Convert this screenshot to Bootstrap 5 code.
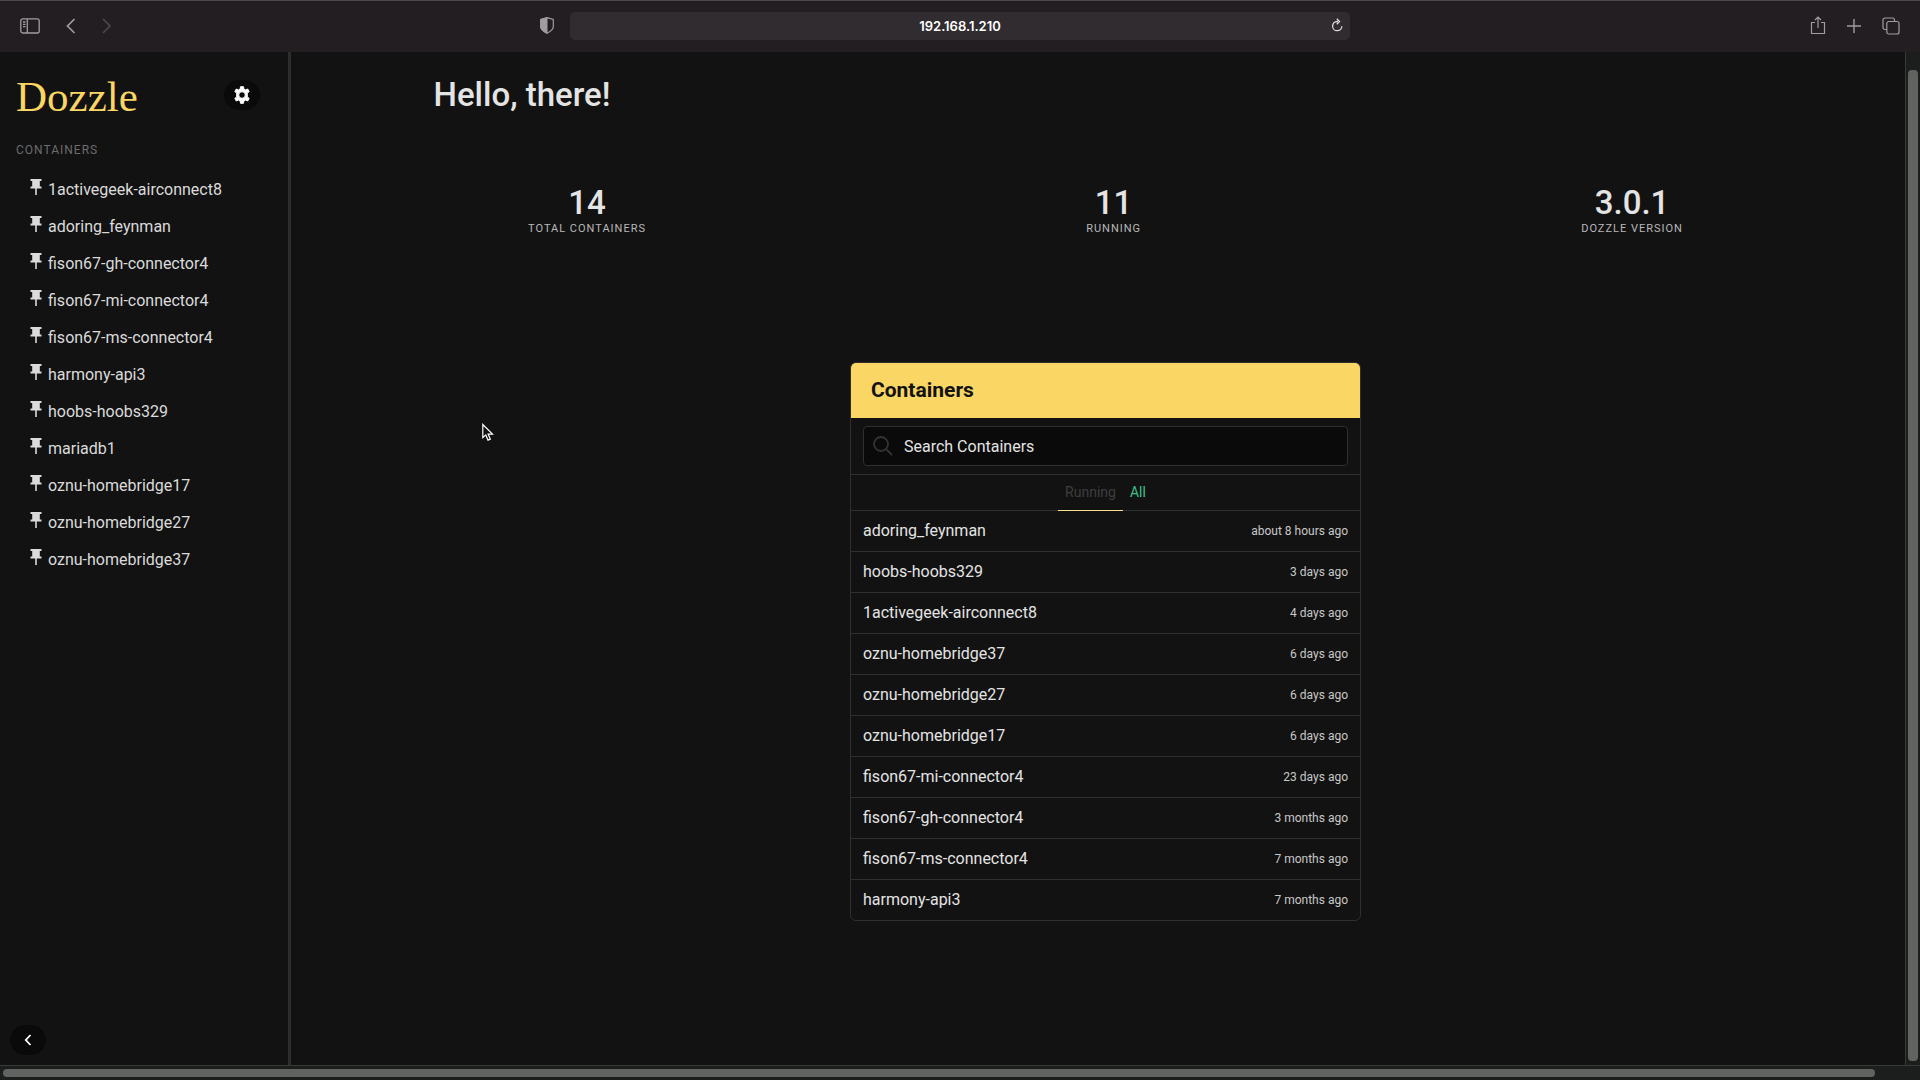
<!DOCTYPE html>
<html lang="en">
<head>
<meta charset="utf-8">
<meta name="viewport" content="width=device-width, initial-scale=1">
<title>Dozzle</title>
<link href="https://cdn.jsdelivr.net/npm/bootstrap@5.3.0/dist/css/bootstrap.min.css" rel="stylesheet">
<style>
  body { font-family: Roboto, "Liberation Sans", sans-serif; font-size: 16px; line-height: 24px; background: #121212; color: #e4e4e4; }
  a { color: inherit; text-decoration: none; }
  svg { display: block; fill: none; stroke: currentColor; }
  .toolbar { height: 52px; background: #221e22; border-top: 1px solid #4b474b; padding-bottom: 2px; color: #a09ca0; }
  .tool { background: none; border: 0; padding: 0; color: inherit; }
  .tool:disabled { color: #4c484c; }
  .side { flex: 1 1 0; }
  .address { flex: 0 1 780px; }
  .address input { height: 28px; border: 0; border-radius: 5px; background: #302c30; color: #fff; font: 600 13px Inter, sans-serif; }
  .reload { right: 7px; top: 6px; color: #dcdadc; }
  .sidebar { width: 291px; border-right: 3px solid #2e2f2d; padding: 21px 28px 10px 16px; }
  .logo { font: 43px/48px "Liberation Serif", serif; color: #fad664; }
  .pill { width: 36px; height: 30px; border: 0; border-radius: 15px; background: #0a0a0a; color: #fff; }
  .settings { margin-bottom: 4px; }
  .collapse-btn { margin-left: -6px; }
  .menu-title { font-size: 12px; line-height: 18px; letter-spacing: 1px; color: #6c6c6c; text-transform: uppercase; margin-top: 20px; }
  .menu { padding: 12px 0 0 14px; }
  .menu a { display: flex; gap: 6px; height: 37px; align-items: center; color: #dbdbdb; }
  .menu svg { margin-bottom: 6px; }
  .content { padding: 0 2px 0 17px; }
  .hello { font-size: 33px; line-height: 36px; font-weight: 500; margin: 0; padding-top: 25px; }
  .inner { width: 100%; max-width: 1344px; }
  .stats { margin-top: 72px; }
  .stat-value { font-size: 33px; line-height: 36px; font-weight: 500; }
  .stat-name { font-size: 11px; line-height: 16px; letter-spacing: 1px; text-transform: uppercase; color: #b8b8b8; }
  .panel { width: 511px; margin-top: 125px; border: 1px solid #2f2f2f; border-radius: 6px; overflow: hidden; }
  .panel-title { background: #fad664; color: #121212; font-size: 21px; font-weight: 700; line-height: 24px; padding: 15px 20px 16px; margin: 0; }
  .search { padding: 8px 12px; border-bottom: 1px solid #2f2f2f; }
  .search input { height: 40px; border: 1px solid #2f2f2f; border-radius: 4px; background: #0a0a0a; color: #e4e4e4; padding: 0 12px 0 40px; }
  .search input::placeholder { color: #e4e4e4; opacity: 1; }
  .search svg { left: 22px; top: 18px; color: #333; }
  .filters { height: 36px; border-bottom: 1px solid #2f2f2f; font-size: 14px; }
  .filters a { height: 36px; line-height: 34px; padding: 0 7px; color: #3cc08e; }
  .filters a.current { color: #3f3f3f; border-bottom: 1px solid #fadf90; }
  .entry { height: 41px; padding: 0 12px; border-bottom: 1px solid #2f2f2f; }
  .entry:last-child { border-bottom: 0; height: 40px; }
  .when { font-size: 12px; color: #c8c8c8; }
  .vtrack { width: 15px; border-left: 1px solid #383a38; background: #1c1e1d; padding: 18px 2px 4px; }
  .htrack { height: 15px; border-top: 1px solid #383a38; background: #1c1e1d; padding: 3px 45px 3px 3px; }
  .thumb { background: #616360; border-radius: 4px; height: 100%; }
  .pointer { left: 482px; top: 423px; }
</style>
<script src="https://cdn.jsdelivr.net/npm/bootstrap@5.3.0/dist/js/bootstrap.bundle.min.js"></script>
</head>
<body class="d-flex flex-column vh-100 overflow-hidden">
<svg width="0" height="0" class="position-absolute" aria-hidden="true"><symbol id="pin" viewBox="0 0 12 16"><path d="M.5 0h11v2H9.800v5.500h1.700v2H6.800V16H5.200V9.500H.5v-2h1.700V2H.5z" fill="#dbdbdb" stroke="none"/></symbol></svg>

<header class="toolbar d-flex align-items-center flex-shrink-0">
  <div class="side d-flex align-items-center ps-3">
    <button class="tool ms-1" aria-label="Sidebar"><svg width="20" height="16" viewBox="0 0 20 16" stroke-width="1.300"><rect x=".8" y=".8" width="18.400" height="14.200" rx="2"/><path d="M7.300 1v14M3 4h2.500M3 6.300h2.500M3 8.600h2.500"/></svg></button>
    <button class="tool ms-4" aria-label="Back"><svg width="14" height="16" viewBox="0 0 14 16" stroke-width="1.700"><path d="M10.500 1 3.500 8l7 7"/></svg></button>
    <button class="tool ms-4" aria-label="Forward" disabled><svg width="10" height="16" viewBox="2 0 10 16" stroke-width="1.700"><path d="m3 1 7 7-7 7"/></svg></button>
    <button class="tool ms-auto me-3" aria-label="Privacy report"><svg width="14" height="17" viewBox="0 0 14 17"><path d="M7 .7 13.300 2.500v7C13.300 13 9.500 15 7 16.300 4.500 15 .7 13 .7 9.500v-7z" stroke-width="1.200"/><path d="M7 .7v15.600C4.500 15 .7 13 .7 9.500v-7z" fill="currentColor"/></svg></button>
  </div>
  <div class="address position-relative">
    <input class="w-100 text-center d-block" type="text" value="192.168.1.210" aria-label="Address">
    <button class="tool reload position-absolute" aria-label="Reload"><svg width="11" height="15" viewBox="0 0 11 15" stroke-width="1.300"><path d="M6 3.500H5.200A4.600 4.600 0 1 0 9.800 8.200M4.800.8l2.700 2.700-2.700 2.700"/></svg></button>
  </div>
  <div class="side d-flex align-items-center justify-content-end pe-3">
    <button class="tool" aria-label="Share"><svg width="16" height="19" viewBox="0 0 16 19" stroke-width="1.200"><path d="M5 6.500H1.500v11h13v-11H11M8 12V1.200M5 4l3-3 3 3"/></svg></button>
    <button class="tool ms-3 ps-1" aria-label="New tab"><svg width="16" height="16" viewBox="0 0 16 16" stroke-width="1.400"><path d="M8 1v14M1 8h14"/></svg></button>
    <button class="tool ms-3 ps-1 pe-1" aria-label="Tab overview"><svg width="18" height="18" viewBox="0 0 18 18" stroke-width="1.200"><path d="M4.500 12.500H3a2 2 0 0 1-2-2V3a2 2 0 0 1 2-2h7.500a2 2 0 0 1 2 2v1.500"/><rect x="4.800" y="4.500" width="12.200" height="12.500" rx="2"/></svg></button>
  </div>
</header>

<div class="d-flex flex-grow-1 overflow-hidden">
  <aside class="sidebar d-flex flex-column flex-shrink-0">
    <div class="d-flex justify-content-between align-items-center">
      <a href="#" class="logo">Dozzle</a>
      <button class="pill settings d-flex align-items-center justify-content-center" aria-label="Settings"><svg width="18" height="18" viewBox="0 0 18 18"><path fill="currentColor" stroke="currentColor" stroke-linejoin="round" fill-rule="evenodd" d="M7.500.7h3l.4 2.400 1.500.8 2.300-.9 1.500 2.600-1.900 1.500v3.800l1.900 1.500-1.500 2.600-2.300-.9-1.500.8-.4 2.400h-3l-.4-2.400-1.500-.8-2.300.9-1.500-2.600 1.900-1.500V7.100L1.800 5.600 3.300 3l2.300.9 1.500-.8zM9 5.700a3.300 3.300 0 1 0 0 6.600 3.300 3.300 0 0 0 0-6.600z"/></svg></button>
    </div>
    <div class="menu-title">Containers</div>
    <nav><ul class="menu list-unstyled m-0">
      <li><a href="#"><svg width="12" height="16"><use href="#pin"/></svg>1activegeek-airconnect8</a></li>
      <li><a href="#"><svg width="12" height="16"><use href="#pin"/></svg>adoring_feynman</a></li>
      <li><a href="#"><svg width="12" height="16"><use href="#pin"/></svg>fison67-gh-connector4</a></li>
      <li><a href="#"><svg width="12" height="16"><use href="#pin"/></svg>fison67-mi-connector4</a></li>
      <li><a href="#"><svg width="12" height="16"><use href="#pin"/></svg>fison67-ms-connector4</a></li>
      <li><a href="#"><svg width="12" height="16"><use href="#pin"/></svg>harmony-api3</a></li>
      <li><a href="#"><svg width="12" height="16"><use href="#pin"/></svg>hoobs-hoobs329</a></li>
      <li><a href="#"><svg width="12" height="16"><use href="#pin"/></svg>mariadb1</a></li>
      <li><a href="#"><svg width="12" height="16"><use href="#pin"/></svg>oznu-homebridge17</a></li>
      <li><a href="#"><svg width="12" height="16"><use href="#pin"/></svg>oznu-homebridge27</a></li>
      <li><a href="#"><svg width="12" height="16"><use href="#pin"/></svg>oznu-homebridge37</a></li>
    </ul></nav>
    <button class="pill collapse-btn d-flex align-items-center justify-content-center mt-auto align-self-start" aria-label="Collapse menu"><svg width="8" height="12" viewBox="0 0 8 12" stroke-width="1.800"><path d="M6.500 1 1.800 6l4.700 5"/></svg></button>
  </aside>

  <main class="content flex-grow-1">
    <div class="inner mx-auto"><h1 class="hello">Hello, there!</h1></div>
    <div class="stats d-flex">
      <div class="flex-grow-1 text-center"><div class="stat-value">14</div><div class="stat-name">Total Containers</div></div>
      <div class="flex-grow-1 text-center"><div class="stat-value">11</div><div class="stat-name">Running</div></div>
      <div class="flex-grow-1 text-center"><div class="stat-value">3.0.1</div><div class="stat-name">Dozzle Version</div></div>
    </div>
    <section class="panel mx-auto">
      <h2 class="panel-title">Containers</h2>
      <div class="search position-relative">
        <input class="w-100 d-block" type="text" placeholder="Search Containers" aria-label="Search Containers">
        <svg class="position-absolute" width="20" height="20" viewBox="0 0 20 20" stroke-width="1.800"><circle cx="8" cy="8" r="7"/><path d="m13 13 6 6"/></svg>
      </div>
      <nav class="filters d-flex justify-content-center"><a href="#" class="current">Running</a><a href="#">All</a></nav>
      <div>
        <a href="#" class="entry d-flex justify-content-between align-items-center"><span>adoring_feynman</span><span class="when">about 8 hours ago</span></a>
        <a href="#" class="entry d-flex justify-content-between align-items-center"><span>hoobs-hoobs329</span><span class="when">3 days ago</span></a>
        <a href="#" class="entry d-flex justify-content-between align-items-center"><span>1activegeek-airconnect8</span><span class="when">4 days ago</span></a>
        <a href="#" class="entry d-flex justify-content-between align-items-center"><span>oznu-homebridge37</span><span class="when">6 days ago</span></a>
        <a href="#" class="entry d-flex justify-content-between align-items-center"><span>oznu-homebridge27</span><span class="when">6 days ago</span></a>
        <a href="#" class="entry d-flex justify-content-between align-items-center"><span>oznu-homebridge17</span><span class="when">6 days ago</span></a>
        <a href="#" class="entry d-flex justify-content-between align-items-center"><span>fison67-mi-connector4</span><span class="when">23 days ago</span></a>
        <a href="#" class="entry d-flex justify-content-between align-items-center"><span>fison67-gh-connector4</span><span class="when">3 months ago</span></a>
        <a href="#" class="entry d-flex justify-content-between align-items-center"><span>fison67-ms-connector4</span><span class="when">7 months ago</span></a>
        <a href="#" class="entry d-flex justify-content-between align-items-center"><span>harmony-api3</span><span class="when">7 months ago</span></a>
      </div>
    </section>
  </main>
  <div class="vtrack flex-shrink-0"><div class="thumb"></div></div>
</div>
<div class="htrack flex-shrink-0"><div class="thumb"></div></div>

<svg class="pointer position-absolute" width="12" height="19" viewBox="0 0 12 19"><path d="M.8 1.500v13.200l3-2.800 2.200 5.200 2.300-1-2.200-5h4.400z" fill="#111" stroke="#fff" stroke-width="1.200"/></svg>
</body>
</html>
